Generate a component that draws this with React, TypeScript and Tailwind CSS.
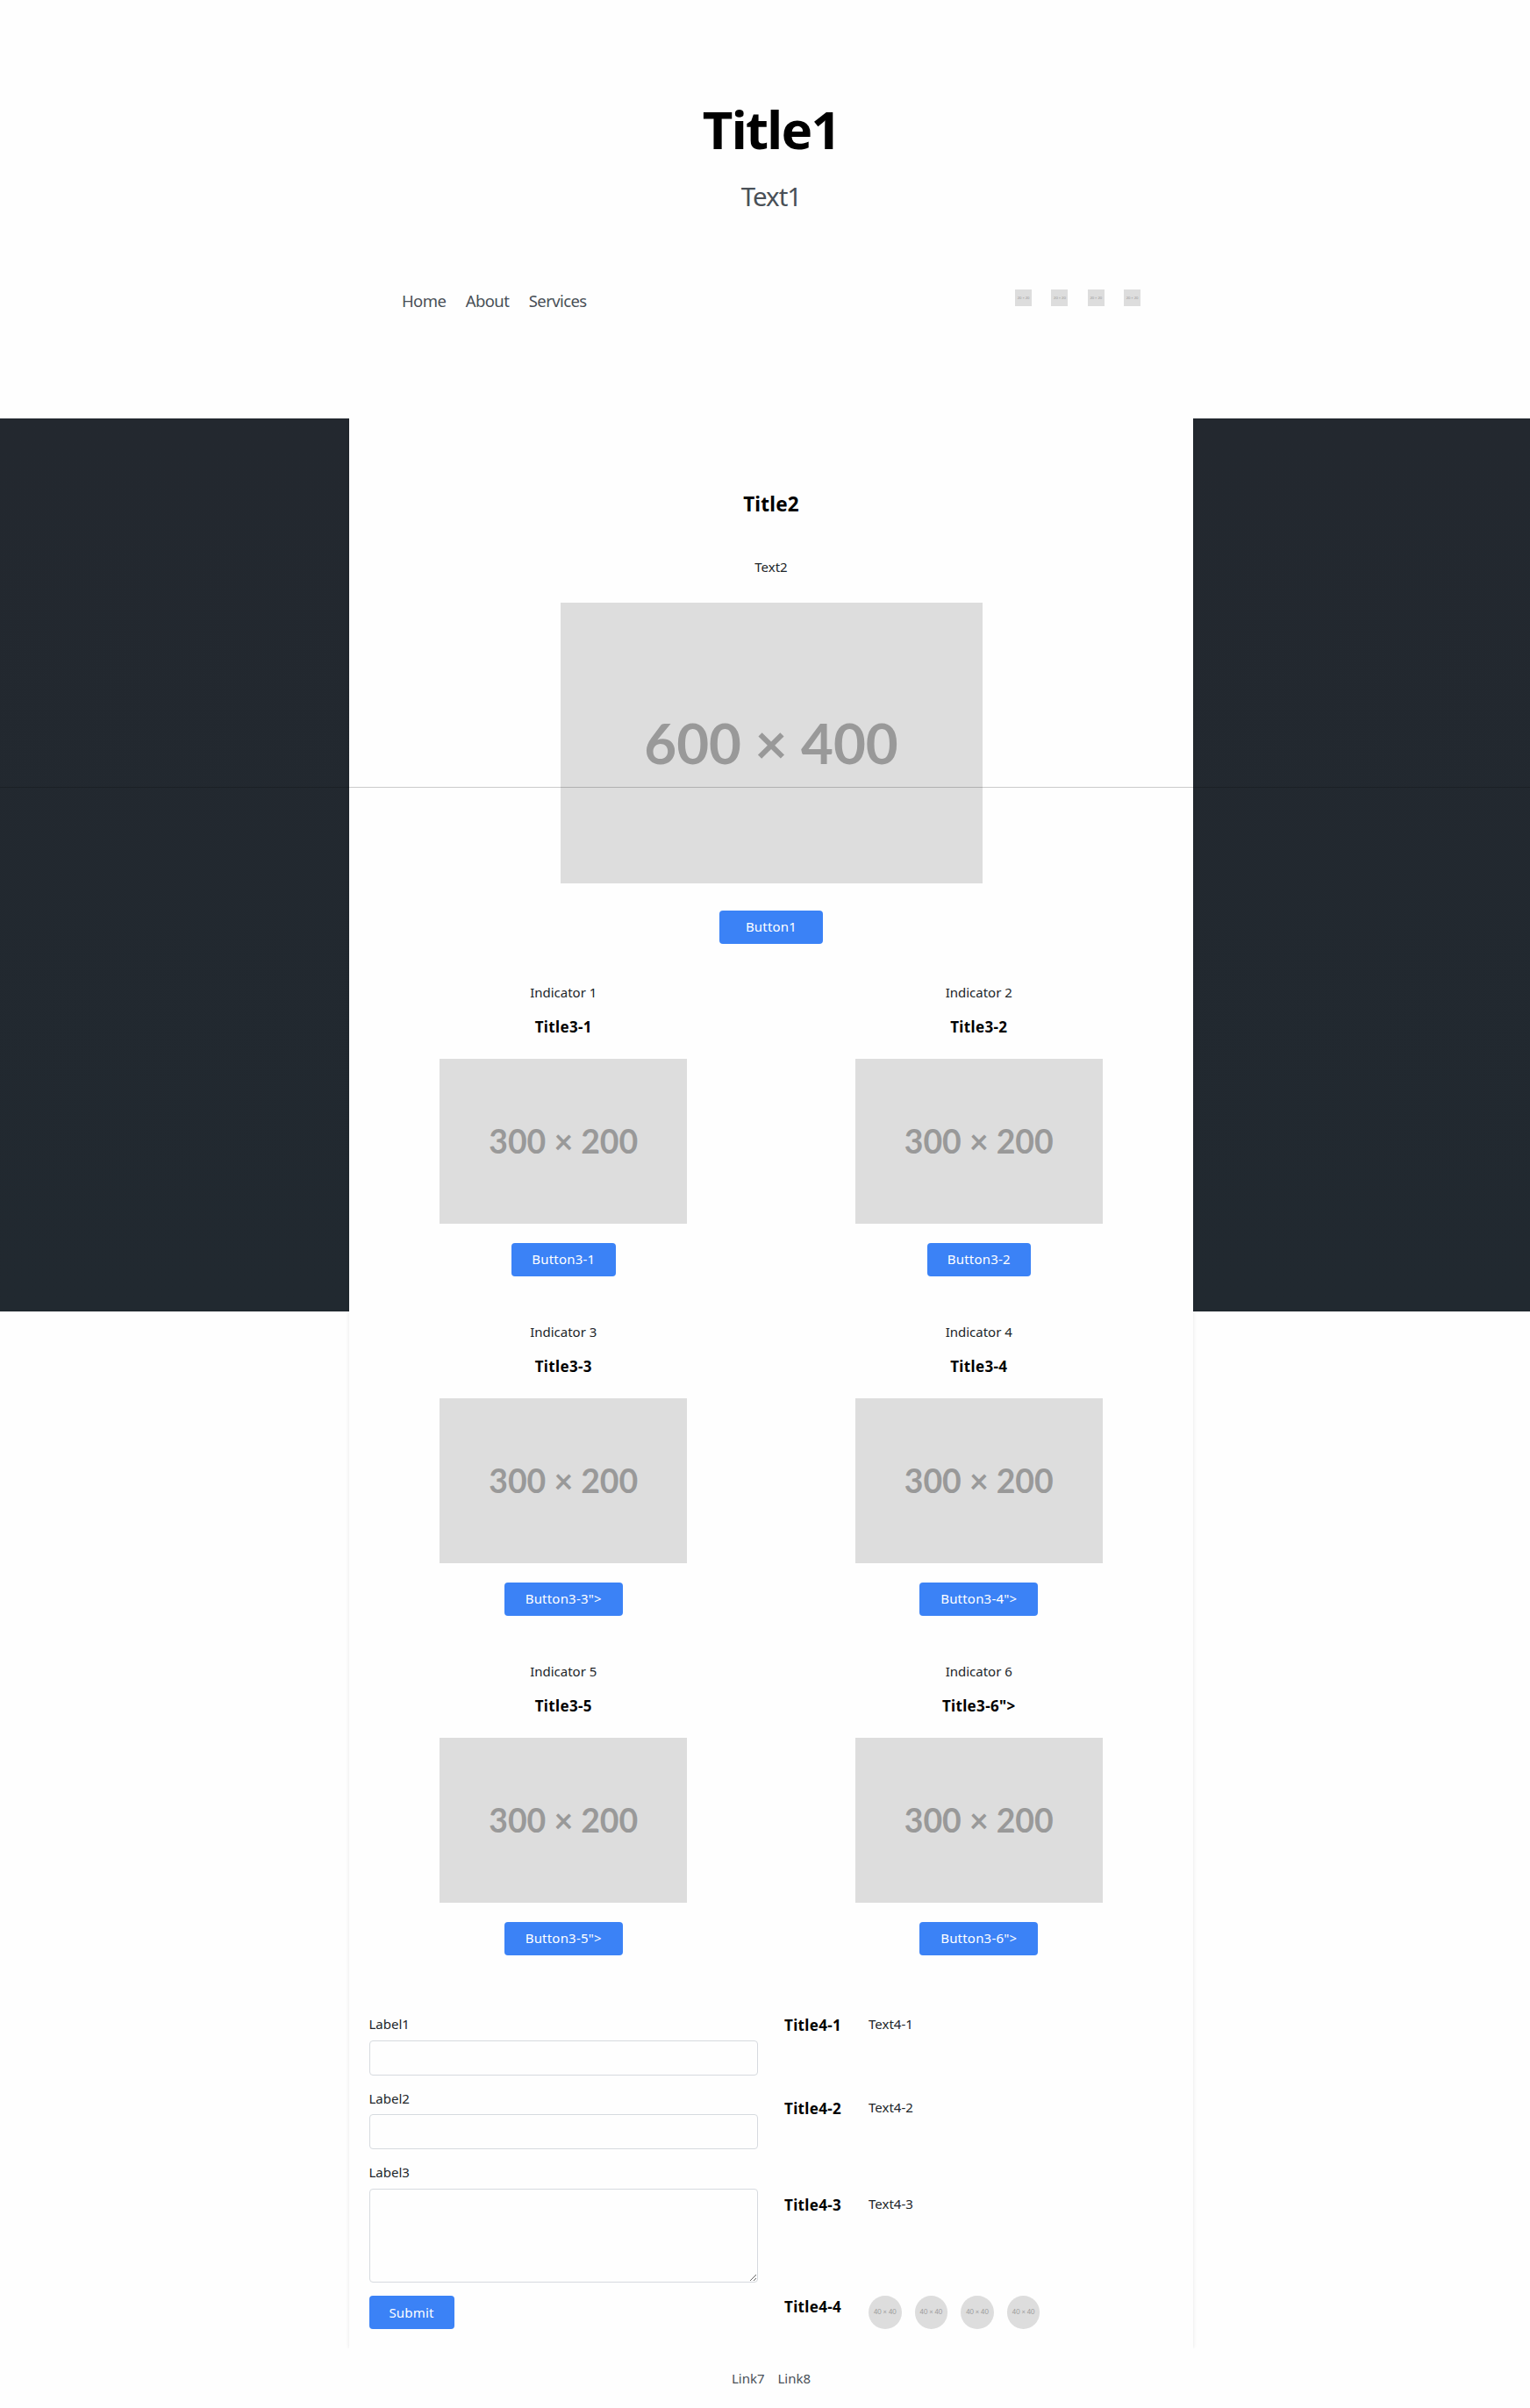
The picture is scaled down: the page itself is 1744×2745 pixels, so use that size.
import React from "react";

function Placeholder({ label, className }: { label: string; className: string }) {
  return (
    <div className={`flex items-center justify-center bg-[#dddddd] font-['Lato'] tracking-normal whitespace-nowrap text-[#999999] ${className}`}>
      {label}
    </div>
  );
}

const btn = "flex h-[37.6px] items-center justify-center rounded-[4px] bg-[#3b82f6] pb-px text-[15px] tracking-[0.2px] text-white";
const field = "mt-[7.5px] block w-full rounded-[4px] border border-[#d6dadf] bg-[#fefefe]";

const cards = [
  { n: 1, title: "Title3-1", button: "Button3-1", w: "w-[118.5px]" },
  { n: 2, title: "Title3-2", button: "Button3-2", w: "w-[118.5px]" },
  { n: 3, title: "Title3-3", button: 'Button3-3">', w: "w-[135px]" },
  { n: 4, title: "Title3-4", button: 'Button3-4">', w: "w-[135px]" },
  { n: 5, title: "Title3-5", button: 'Button3-5">', w: "w-[135px]" },
  { n: 6, title: 'Title3-6">', button: 'Button3-6">', w: "w-[135px]" },
];

const rows = [
  { title: "Title4-1", text: "Text4-1", h: "h-[95px]" },
  { title: "Title4-2", text: "Text4-2", h: "h-[109.5px]" },
  { title: "Title4-3", text: "Text4-3", h: "h-[116.5px]" },
];

export default function App() {
  return (
    <div className="relative h-[2745px] w-[1744px] overflow-hidden bg-[#fefefe] font-['Noto_Sans',sans-serif] text-[15px] leading-[22px] text-[#212529]">
      <header className="ml-[398px] flex h-[477px] w-[962px] flex-col items-center">
        <h1 className="mt-[111px] text-[60px] leading-[72px] font-bold tracking-[-1.7px] text-black">Title1</h1>
        <p className="mt-[19px] text-[29.5px] leading-[44px] tracking-[-1px] text-[#495057]">Text1</p>
        <div className="mt-[83px] flex w-full justify-between px-[60px]">
          <nav className="flex gap-[22.5px] text-[18.5px] leading-[28px] tracking-[-0.6px] text-[#495057]">
            <a>Home</a>
            <a>About</a>
            <a>Services</a>
          </nav>
          <div className="flex gap-[22.3px] pt-px">
            {[0, 1, 2, 3].map((i) => (
              <Placeholder key={i} label="20 × 20" className="size-[19px] text-[4px]" />
            ))}
          </div>
        </div>
      </header>
      <div className="bg-[linear-gradient(#23282f,#212930)] bg-[length:100%_1018px] bg-no-repeat">
        <main className="ml-[398px] h-[2200px] w-[962px] bg-[#fefefe] px-[22.5px] shadow-[0_0_4px_rgba(0,0,0,0.1)] [clip-path:inset(0_-4px)]">
          <section className="flex flex-col items-center">
            <h2 className="mt-[82px] text-[22.5px] leading-[32px] font-bold tracking-[0.2px] text-black">Title2</h2>
            <p className="mt-[43.5px]">Text2</p>
            <Placeholder label="600 × 400" className="mt-[30.9px] h-[320px] w-[481px] text-[63.7px] font-bold" />
            <button className={`${btn} mt-[30.6px] w-[118px]`}>Button1</button>
          </section>
          <section className="mt-[44.4px] grid grid-cols-2 gap-x-[30px]">
            {cards.map((c) => (
              <div key={c.n} className="flex h-[387px] flex-col items-center">
                <p>Indicator {c.n}</p>
                <h3 className="mt-[17px] text-[17px] leading-[24px] font-bold tracking-[0.35px] text-black">{c.title}</h3>
                <Placeholder label="300 × 200" className="mt-[24px] h-[188px] w-[282px] text-[37.4px] font-bold" />
                <button className={`${btn} ${c.w} mt-[22px]`}>{c.button}</button>
              </div>
            ))}
          </section>
          <section className="mt-[15.3px] grid grid-cols-2 gap-x-[30px]">
            <form>
              <label className="block">Label1</label>
              <input className={`${field} h-[40px]`} />
              <label className="mt-[15px] block">Label2</label>
              <input className={`${field} h-[40px]`} />
              <label className="mt-[15px] block">Label3</label>
              <textarea className={`${field} h-[107.5px] resize`} />
              <button type="button" className={`${btn} mt-[15px] w-[97px]`}>Submit</button>
            </form>
            <div>
              {rows.map((r) => (
                <div key={r.title} className={`flex ${r.h}`}>
                  <h3 className="w-[96px] pt-px text-[17px] leading-[24px] font-bold tracking-[0.35px] text-black">{r.title}</h3>
                  <p>{r.text}</p>
                </div>
              ))}
              <div className="flex">
                <h3 className="w-[96px] pt-px text-[17px] leading-[24px] font-bold tracking-[0.35px] text-black">Title4-4</h3>
                <div className="flex gap-[15px]">
                  {[0, 1, 2, 3].map((i) => (
                    <Placeholder key={i} label="40 × 40" className="size-[37.6px] rounded-full text-[7.5px]" />
                  ))}
                </div>
              </div>
            </div>
          </section>
        </main>
      </div>
      <footer className="mt-[23px] ml-[398px] flex w-[962px] justify-center gap-[15px] text-[#495057]">
        <a>Link7</a>
        <a>Link8</a>
      </footer>
      {/* Hairline across the full page width, over the hero image */}
      <div className="absolute top-[897px] left-0 h-px w-full bg-black/20" />
    </div>
  );
}
